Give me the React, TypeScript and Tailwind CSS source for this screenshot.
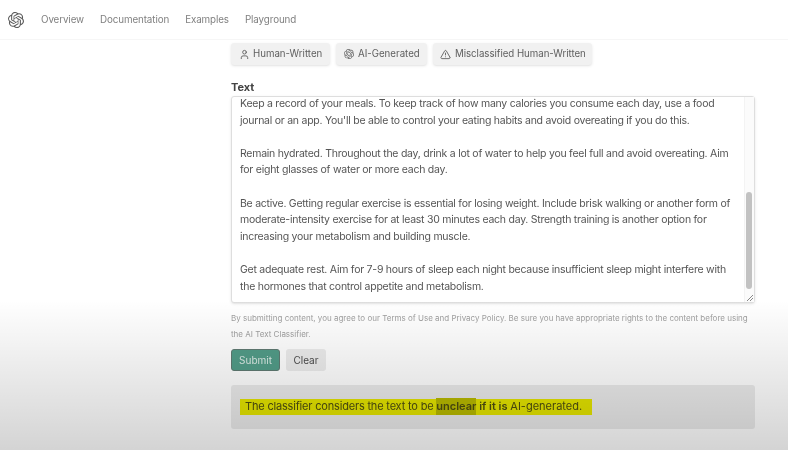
import { TriangleAlert, User } from "lucide-react";
import { SiOpenai } from "react-icons/si";

const navItems = ["Overview", "Documentation", "Examples", "Playground"];

const paragraphs = [
  ["Keep a record of your meals. To keep track of how many calories you consume each day, use a food", "journal or an app. You'll be able to control your eating habits and avoid overeating if you do this."],
  ["Remain hydrated. Throughout the day, drink a lot of water to help you feel full and avoid overeating. Aim", "for eight glasses of water or more each day."],
  ["Be active. Getting regular exercise is essential for losing weight. Include brisk walking or another form of", "moderate-intensity exercise for at least 30 minutes each day. Strength training is another option for", "increasing your metabolism and building muscle."],
  ["Get adequate rest. Aim for 7-9 hours of sleep each night because insufficient sleep might interfere with", "the hormones that control appetite and metabolism."],
];

export default function App() {
  return (
    <div className="relative h-[450px] w-[788px] overflow-hidden bg-white font-['Inter',sans-serif] text-[#3f3f46]">
      <div className="blur-[0.5px]">
        <nav className="flex h-[40px] items-center border-b border-[#f6f6f6] pl-[8px]">
          <SiOpenai className="mr-[17px] h-[16px] w-[16px] text-[#5a5a5a]" />
          <div className="mt-[2px] flex gap-[16px] text-[9.8px] tracking-[-0.1px] text-[#808080]">
            {navItems.map((item) => (
              <span key={item}>{item}</span>
            ))}
          </div>
        </nav>

        <main className="ml-[231px] w-[524px]">
          <div className="mt-[3px] flex gap-[6px] text-[9.7px] text-[#606060]">
            <span className="flex h-[22px] w-[99px] items-center gap-[3px] rounded-[3px] bg-[#f1f1f1] pl-[8px] shadow-sm">
              <User className="h-[11px] w-[11px]" />
              Human-Written
            </span>
            <span className="flex h-[22px] w-[91px] items-center gap-[4px] rounded-[3px] bg-[#f1f1f1] pl-[8px] shadow-sm">
              <SiOpenai className="h-[10px] w-[10px]" />
              AI-Generated
            </span>
            <span className="flex h-[22px] w-[159px] items-center gap-[4px] rounded-[3px] bg-[#f1f1f1] pl-[7px] shadow-sm">
              <TriangleAlert className="h-[11px] w-[11px]" />
              <span className="tracking-[-0.03px]">Misclassified Human-Written</span>
            </span>
          </div>

          <div className="mt-[15px] text-[11px] leading-[14px] font-bold text-[#444]">Text</div>

          <div className="relative mt-[2px] flex h-[207px] w-[524px] rounded-[3px] border border-[#dedede] bg-white shadow-sm">
            <div className="-mt-[1px] flex-1 overflow-hidden pl-[8px] text-[10.5px] leading-[16.6px] tracking-[-0.25px] text-[#555]">
              {paragraphs.map((lines) => (
                <p key={lines[0]} className="mb-[16.6px] whitespace-nowrap">
                  {lines.map((line) => (
                    <span key={line} className="block">{line}</span>
                  ))}
                </p>
              ))}
            </div>
            <div className="w-[10px] border-l border-[#f3f3f3] bg-[#fbfbfb] pl-[1px] pt-[95px]">
              <div className="h-[97px] w-[6px] rounded-full bg-[#c2c2c2]" />
            </div>
            <svg className="absolute bottom-[1px] right-[1px] h-[6px] w-[6px]" viewBox="0 0 6 6">
              <path d="M0 6 L6 0 M3 6 L6 3" stroke="#888" strokeWidth="1" />
            </svg>
          </div>

          <p className="mt-[7px] whitespace-nowrap text-[8px] leading-[16px] text-[#a0a0a0]">
            By submitting content, you agree to our Terms of Use and Privacy Policy. Be sure you have appropriate rights to the content before using
            <br />
            the AI Text Classifier.
          </p>

          <div className="mt-[7px] flex gap-[6px] text-[10px]">
            <button className="h-[22px] w-[49px] rounded-[3px] border border-[#5f7a72] bg-[#529c88] text-[#dcebe6]">Submit</button>
            <button className="h-[22px] w-[40px] rounded-[3px] bg-[#ececec] text-[#4a4a4a]">Clear</button>
          </div>

          <div className="mt-[14px] flex h-[44px] items-center rounded-[3px] bg-[#ebebeb] pb-[1px] pl-[9px]">
            <span className="flex h-[16px] w-[352px] items-center whitespace-nowrap bg-[#e4e400] pl-[5px] text-[11px] text-[#4d4d10]">
              <span className="tracking-[-0.18px]">The classifier considers the text to be&nbsp;</span>
              <b className="bg-[#b8b900] font-semibold">unclear</b>
              <b className="font-semibold">&nbsp;if it is&nbsp;</b>
              AI-generated.
            </span>
          </div>
        </main>
      </div>

      {/* player shadow fading in over the bottom of the frame */}
      <div className="pointer-events-none absolute inset-x-0 bottom-0 h-[150px] bg-gradient-to-b from-black/0 to-black/[0.17]" />
    </div>
  );
}
